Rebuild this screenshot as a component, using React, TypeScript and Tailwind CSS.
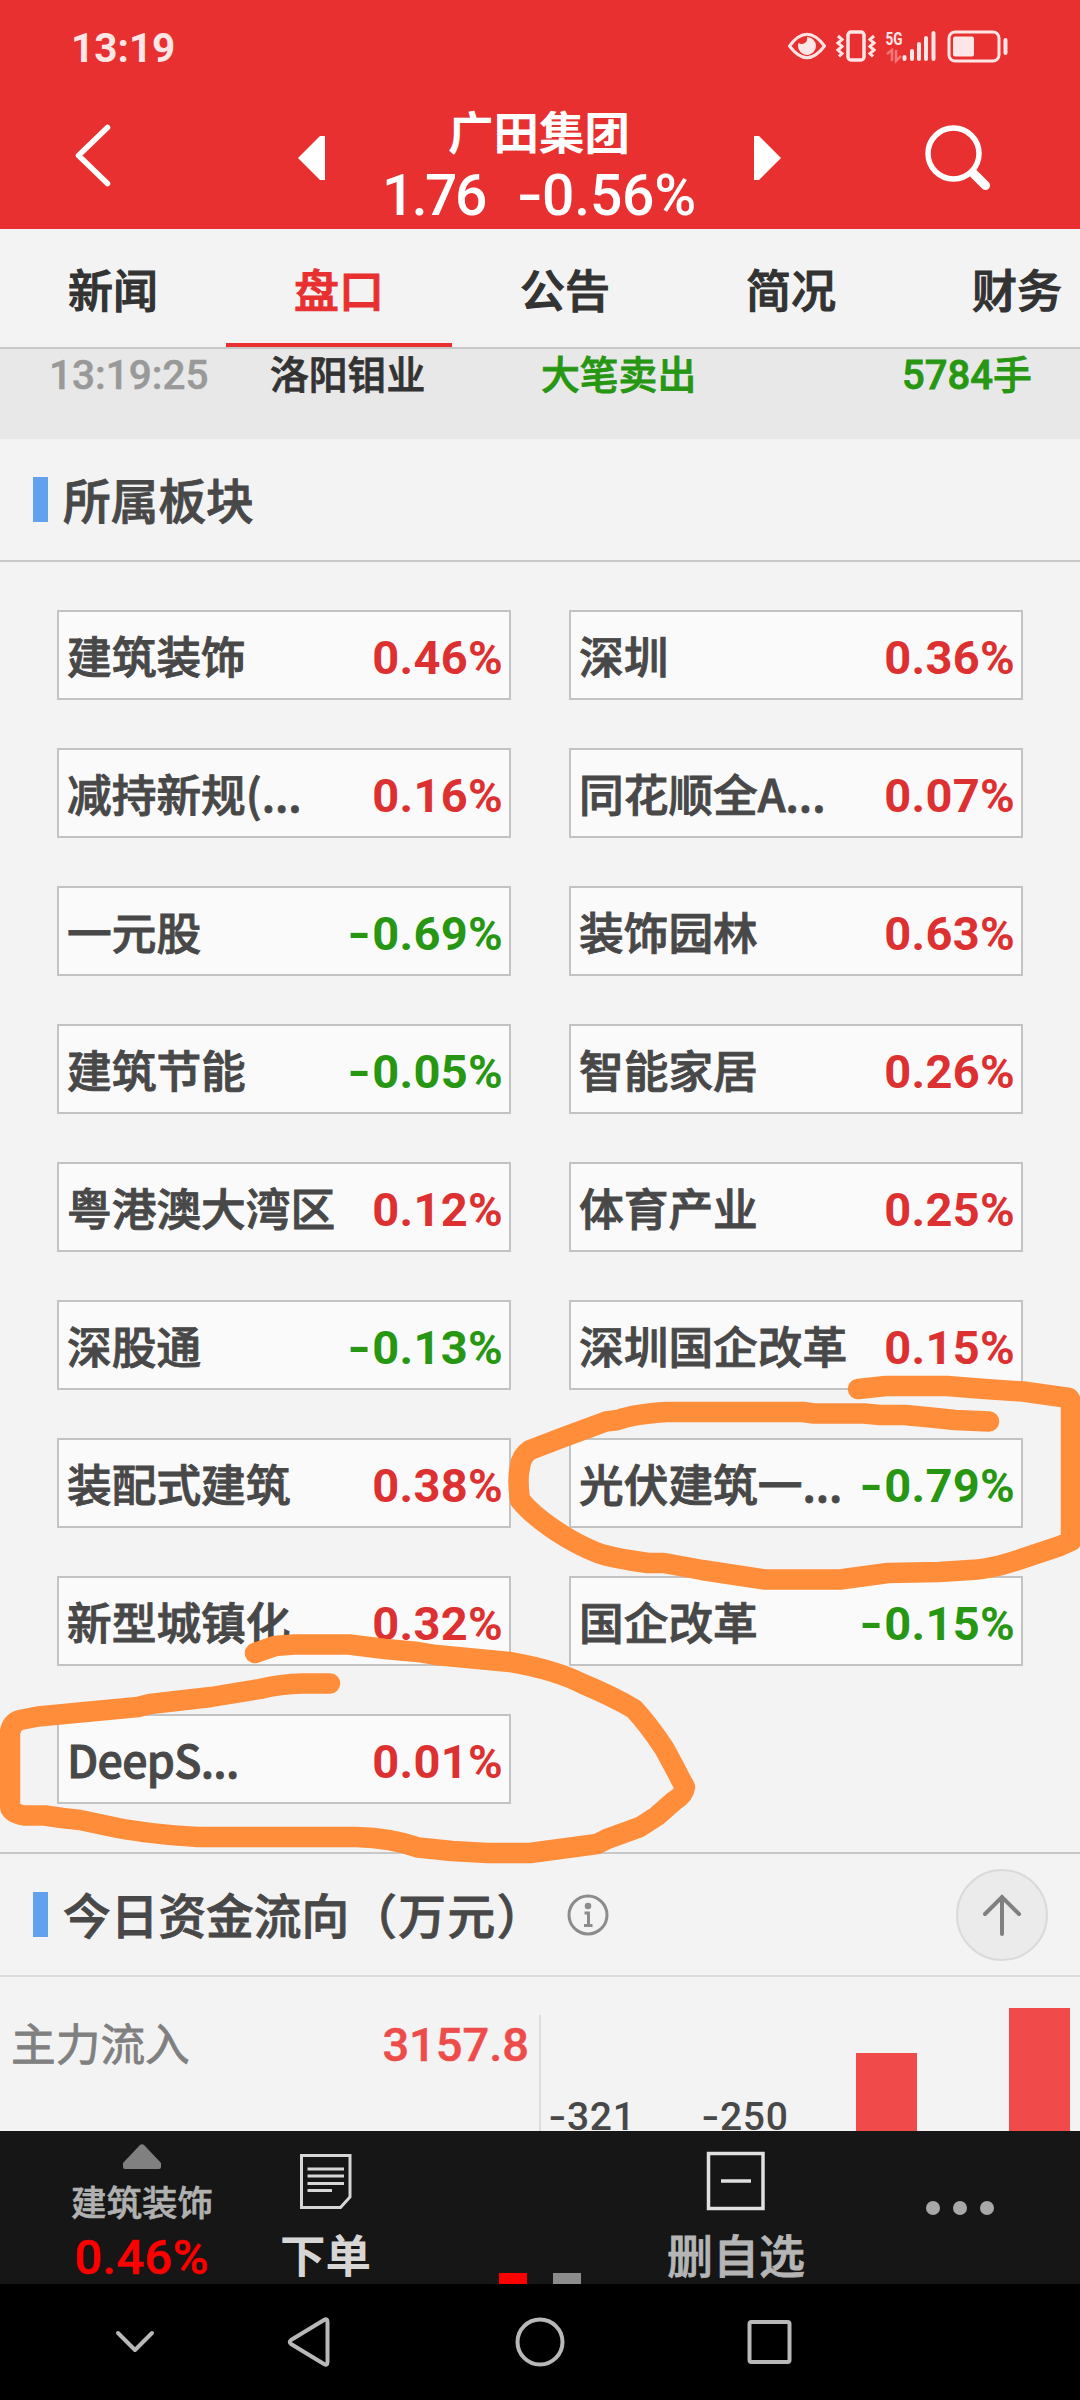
import type { ReactNode } from "react";
import clsx from "clsx";

const tabs = ["新闻", "盘口", "公告", "简况", "财务"];

const sectors = [
  { name: "建筑装饰", change: "0.46%" },
  { name: "深圳", change: "0.36%" },
  { name: "减持新规(...", change: "0.16%" },
  { name: "同花顺全A...", change: "0.07%" },
  { name: "一元股", change: "-0.69%" },
  { name: "装饰园林", change: "0.63%" },
  { name: "建筑节能", change: "-0.05%" },
  { name: "智能家居", change: "0.26%" },
  { name: "粤港澳大湾区", change: "0.12%" },
  { name: "体育产业", change: "0.25%" },
  { name: "深股通", change: "-0.13%" },
  { name: "深圳国企改革", change: "0.15%" },
  { name: "装配式建筑", change: "0.38%" },
  { name: "光伏建筑一...", change: "-0.79%" },
  { name: "新型城镇化", change: "0.32%" },
  { name: "国企改革", change: "-0.15%" },
  { name: "DeepS...", change: "0.01%" },
];

// Figures are set in Roboto, Chinese text falls through to Noto
const num = "font-[Roboto,'Noto_Sans_CJK_SC',sans-serif]";

function StatusIcons() {
  return (
    <svg width="224" height="60" viewBox="786 16 224 60" fill="none" stroke="#ffe6e6">
      {/* eye */}
      <path d="M789.5 46Q807 22.500 824.500 46Q807 69.500 789.500 46Z" strokeWidth="3" strokeLinejoin="round" />
      <path d="M807 37a9 9 0 1 1-9 9c0-1 .2-2 .6-3a5.500 5.500 0 0 0 8.400-6z" fill="#ffe6e6" stroke="none" />
      {/* vibrate */}
      <rect x="848" y="32" width="16" height="28" rx="3" strokeWidth="3.500" />
      <path d="M838 36l4 3.500-4 3.500 4 3.500-4 3.500 4 3.500-3 3M874 36l-4 3.500 4 3.500-4 3.500 4 3.500-4 3.500 3 3" strokeWidth="3" />
      {/* signal */}
      <text x="885.500" y="45" fontSize="19" fontWeight="700" fill="#ffe6e6" stroke="none" textLength="17" lengthAdjust="spacingAndGlyphs" className="font-[Roboto,sans-serif]">
        5G
      </text>
      <path d="M887 54l5-4v11M896 50v11l5-5" stroke="#f07878" strokeWidth="2.500" />
      <path d="M904.500 57v2M912 51v8M919 44v15M926 38v21M933.500 33v26" strokeWidth="4" strokeLinecap="round" />
      {/* battery */}
      <rect x="949" y="32" width="50" height="29" rx="6" strokeWidth="3" />
      <rect x="953" y="36.500" width="21" height="20" rx="2" fill="#ffe6e6" stroke="none" />
      <path d="M1005.500 40v13" strokeWidth="4" strokeLinecap="round" />
    </svg>
  );
}

/* Signed figure, with the minus stretched to the width of a dash */
function Figure({ value }: { value: string }) {
  if (!value.startsWith("-")) return <>{value}</>;
  return (
    <>
      <span className="inline-block origin-right scale-x-130">-</span>
      {value.slice(1)}
    </>
  );
}

function SectionTitle({ title, unit, children }: { title: string; unit?: string; children?: ReactNode }) {
  return (
    <div className="flex items-center h-full">
      <div className="w-[15px] h-[45px] ml-[33px] mr-[15px] bg-[#62a1ee]" />
      <h2 className="text-[47.700px] leading-[46px] pb-[2px] font-medium [-webkit-text-stroke:0.9px] text-[#484848] whitespace-nowrap">
        {title}
        {unit && <span className="tracking-[1.500px]">{unit}</span>}
      </h2>
      {children}
    </div>
  );
}

function SectorCard({ name, change }: { name: string; change: string }) {
  const down = change.startsWith("-");
  return (
    <div className="flex items-center justify-between w-[454px] h-[90px] border-2 border-[#c3c3c3] bg-[#fafafa] pl-2 pr-[6px] text-[44.700px] leading-[80px] font-medium whitespace-nowrap">
      <span className={clsx("pb-px text-[#484848] [-webkit-text-stroke:0.9px]", name === "DeepS..." && "tracking-[-0.700px]")}>
        {name}
      </span>
      <span className={clsx(num, "pt-[5px] text-[47px] tracking-[0.300px] font-bold", down ? "text-[#279713]" : "text-[#dd3131]")}>
        <Figure value={change} />
      </span>
    </div>
  );
}

/* Hand drawn marker rings over the sector grid */
function MarkerRings() {
  return (
    <svg
      className="absolute left-0 top-0 z-20 pointer-events-none"
      width="1080"
      height="2400"
      viewBox="0 0 1080 2400"
      fill="none"
      stroke="#ff8d3a"
      strokeWidth="20.500"
      strokeLinecap="round"
      strokeLinejoin="round">
      <path d="M858 1389L886 1386H947L985 1389L1023 1391.500L1069 1398Q1071 1400 1071 1404V1541L1060 1546L1027 1557Q990 1570 970 1570L939 1572L888 1573L840 1579.500H765L702 1570L664 1563H648Q612 1558 598 1553C570 1542 536 1520 520 1500Q517 1478 520 1467Q521 1456 530 1450L564 1437L606 1421.500L618 1420Q634 1414 667 1412H803L814 1413.500H864L880 1415H905L931 1417.500L955 1420L989 1421.500" />
      <path d="M255 1653L275 1646L294 1644.500H349L385 1649L418 1652L436 1655L510 1662Q556 1670 583 1684Q612 1696 634 1709Q648 1724 664 1748Q675 1768 681 1780L685 1787Q684 1795 674 1801L657 1816L640 1827L607 1839L597 1844L530 1853H487L452 1851L418 1847.500Q392 1838 356 1837H197Q150 1834 118 1828L80 1820L62 1818L45 1815.500H24Q10 1813 10 1805V1733Q11 1723 20 1720L38 1716.500L138 1707L150 1704L211 1697L260 1689Q280 1684 303 1683.500H330" />
    </svg>
  );
}

export default function App() {
  return (
    <div className="relative flex flex-col w-[1080px] h-[2400px] overflow-hidden bg-[#f3f3f3] font-['Noto_Sans_CJK_SC',sans-serif]">
      {/* Header */}
      <header className="h-[229px] bg-[#e83030] text-white">
        <div className="flex items-center justify-between h-[92px] pl-[71px] pr-[70px]">
          <span className={clsx(num, "pt-[4px] text-[40.500px] leading-[48px] font-bold text-[#ffe6e6]")}>13:19</span>
          <StatusIcons />
        </div>
        <div className="flex h-[137px]">
          <svg width="250" height="137" viewBox="0 92 250 137" fill="none" stroke="#fff" strokeWidth="5.500" strokeLinecap="round" strokeLinejoin="round">
            <path d="M107.500 127.500L78.500 155.500L107.500 183.500" />
          </svg>
          <svg width="100" height="137" viewBox="250 92 100 137" fill="#fff">
            <path d="M325 136h-5L298 158L320 180h5z" />
          </svg>
          <div className="flex flex-col items-center w-[378px] mr-[2px] pt-[15px] whitespace-nowrap">
            <h1 className="text-[45.500px] leading-[46px] font-bold">广田集团</h1>
            <div className={clsx(num, "flex justify-center gap-[38px] mt-[15px] text-[57px] leading-[56px] font-medium")}>
              <span className="tracking-[-2.500px]">1.76</span>
              <span className="tracking-[-0.200px]">
                <Figure value="-0.56%" />
              </span>
            </div>
          </div>
          <svg width="120" height="137" viewBox="730 92 120 137" fill="#fff">
            <path d="M754 136h5l22 22l-22 22h-5z" />
          </svg>
          <svg width="230" height="137" viewBox="850 92 230 137" fill="none" stroke="#fff" strokeLinecap="round">
            <circle cx="953.500" cy="153.500" r="25.500" strokeWidth="5.500" />
            <path d="M974 174L985.500 185.500" strokeWidth="9" />
          </svg>
        </div>
      </header>

      {/* Tabs */}
      <nav className="flex h-[120px] overflow-hidden border-b-2 border-[#c8c8c8]">
        {tabs.map((tab) => (
          <div
            key={tab}
            className={clsx(
              "w-[226px] shrink-0 text-center text-[45px] leading-[120px] font-medium [-webkit-text-stroke:1.100px]",
              tab === "盘口" ? "border-b-4 border-[#e83030] text-[#e83030]" : "text-[#333]"
            )}>
            {tab}
          </div>
        ))}
      </nav>

      {/* Latest big order */}
      <div className="flex h-[90px] bg-[#e8e8e8] pl-[49px] text-[38.800px] leading-[47px] font-medium [-webkit-text-stroke:0.800px] whitespace-nowrap">
        <span className={clsx(num, "w-[221px] text-[40.500px] leading-[53px] [-webkit-text-stroke:0.500px] text-[#999]")}>13:19:25</span>
        <span className="w-[271px] text-[#333]">洛阳钼业</span>
        <span className="w-[361px] text-[#279713]">大笔卖出</span>
        <span className={clsx(num, "text-[40px] leading-[53px] text-[#279713]")}>
          5784<span className="text-[38.800px]">手</span>
        </span>
      </div>

      {/* Sectors */}
      <div className="h-[123px] border-b-2 border-[#c8c8c8]">
        <SectionTitle title="所属板块" />
      </div>
      <div className="grid grid-cols-[454px_454px] content-start gap-x-[58px] gap-y-12 h-[1290px] pt-12 pl-[57px]">
        {sectors.map((s) => (
          <SectorCard key={s.name} name={s.name} change={s.change} />
        ))}
      </div>

      {/* Money flow */}
      <div className="flex items-center justify-between h-[125px] border-y-2 border-t-[#c8c8c8] border-b-[#dcdcdc] pr-8">
        <SectionTitle title="今日资金流向" unit="（万元）">
          <svg className="ml-[21px]" width="42" height="42" viewBox="0 0 42 42" fill="none" stroke="#8c8c8c" strokeWidth="3">
            <circle cx="21" cy="21" r="19" />
            <circle cx="21" cy="12" r="3.300" fill="#8c8c8c" stroke="none" />
            <path d="M17.500 19H21.500V31M17 31.500H25.500" />
          </svg>
        </SectionTitle>
        <div className="flex items-center justify-center w-[92px] h-[92px] rounded-full border-2 border-[#dadada] bg-[#ebebeb]">
          <svg width="44" height="44" viewBox="0 0 44 44" fill="none" stroke="#808080" strokeWidth="4" strokeLinecap="round">
            <path d="M22 41V4M5 21L22 4L39 21" />
          </svg>
        </div>
      </div>
      <div className="flex h-[154px]">
        <div className="flex justify-between w-[539px] pt-[32px] pl-[11px] pr-[10px] text-[44.700px] leading-[66px]">
          <span className="text-[#808080] [-webkit-text-stroke:0.800px]">主力流入</span>
          <span className={clsx(num, "pt-[3px] text-[47px] font-medium [-webkit-text-stroke:0.500px] text-[#ee4b4b]")}>3157.8</span>
        </div>
        <div className="w-[2px] h-[116px] mt-[38px] bg-[#dcdcdc]" />
        <div className={clsx(num, "flex items-end h-[154px] pl-[9px] text-[39px] leading-[50px] font-medium text-[#484848]")}>
          <span className="w-[150px] ml-[3px] -mb-[11px] tracking-[0.700px]">
            <Figure value="-321" />
          </span>
          <span className="w-[150px] ml-[3px] -mb-[11px] tracking-[0.700px]">
            <Figure value="-250" />
          </span>
          <div className="w-[61px] h-[78px] mr-[92px] bg-[#f04a4a]" />
          <div className="w-[61px] h-[123px] bg-[#f04a4a]" />
        </div>
      </div>

      {/* Bottom toolbar */}
      <div className="relative z-10 flex h-[153px] shrink-0 bg-[#161616] font-medium whitespace-nowrap">
        <div className="flex flex-col items-center w-[284px] pt-[12px]">
          <svg width="42" height="27" viewBox="0 0 42 27" fill="#808080">
            <path d="M18.500 2.500Q21 0 23.500 2.500L40 20V24Q40 26 38 26H4Q2 26 2 24V20Z" />
          </svg>
          <span className="mt-[11px] text-[35.500px] leading-[40px] [-webkit-text-stroke:0.600px] text-[#b0b0b0]">建筑装饰</span>
          <span className={clsx(num, "mt-[12px] text-[49px] leading-[50px] tracking-[0.300px] [-webkit-text-stroke:0.600px] text-[#ff0000]")}>0.46%</span>
        </div>
        <div className="flex flex-col items-center w-[83px] pt-[20px]">
          <svg className="shrink-0" width="54" height="58" viewBox="0 0 54 58" fill="none" stroke="#d8d5d5" strokeWidth="3">
            <path d="M2.500 4.500H51V46L41.500 56.500H2.500Z" />
            <path d="M8.500 18H45M8.500 25H45M8.500 32.500H45M8.500 39.500H33" />
          </svg>
          <span className="mt-[21px] text-[45.500px] leading-[46px] font-bold text-[#d8d5d5]">下单</span>
        </div>
        <div className="flex items-end justify-center gap-[26px] w-[346px]">
          <div className="w-7 h-[11px] bg-[#ff0000]" />
          <div className="w-7 h-[11px] bg-[#8c8c8c]" />
        </div>
        <div className="flex flex-col items-center w-[46px] pt-[20px]">
          <svg className="shrink-0" width="60" height="60" viewBox="0 0 60 60" fill="none" stroke="#e0e0e0" strokeWidth="3.500">
            <path d="M2.500 2.500H57V57.500H2.500ZM15 30H45" />
          </svg>
          <span className="mt-[19px] text-[46px] leading-[46px] [-webkit-text-stroke:0.800px] text-[#b5b5b5]">删自选</span>
        </div>
        <div className="flex gap-[13px] pt-[70px] pl-[167px]">
          <div className="size-3.5 rounded-full bg-[#a8a8a8]" />
          <div className="size-3.5 rounded-full bg-[#a8a8a8]" />
          <div className="size-3.5 rounded-full bg-[#a8a8a8]" />
        </div>
      </div>

      {/* System navigation */}
      <div className="h-[116px] shrink-0 bg-black">
        <svg width="1080" height="116" viewBox="0 2284 1080 116" fill="none" stroke="#b8b8b8" strokeWidth="4" strokeLinecap="round" strokeLinejoin="round">
          <path d="M118 2333L135 2350L152 2333" />
          <path d="M327.500 2322V2362Q327.500 2366 324 2364L291 2344Q288.500 2342 291 2340L324 2320Q327.500 2318 327.500 2322Z" />
          <circle cx="540" cy="2342" r="22.500" />
          <rect x="749.500" y="2322" width="40" height="40" rx="2" />
        </svg>
      </div>

      <MarkerRings />
    </div>
  );
}
